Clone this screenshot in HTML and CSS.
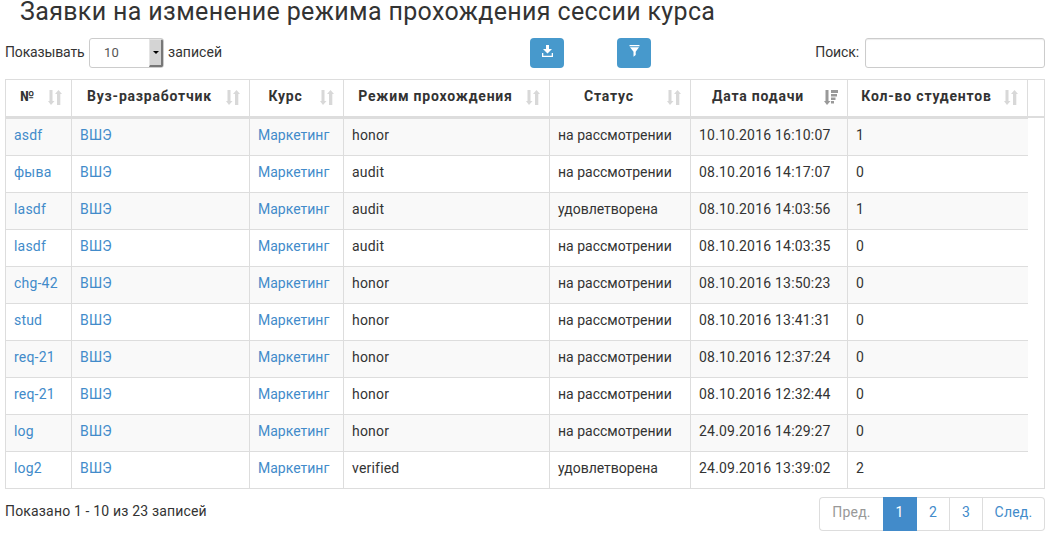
FILE: index.html
```html
<!DOCTYPE html>
<html lang="ru">
<head>
<meta charset="utf-8">
<title>Заявки</title>
<link rel="stylesheet" href="styles.css">
</head>
<body>
<svg class="defs" aria-hidden="true">
  <symbol id="sort" viewBox="0 0 14 15"><path d="M1.500 0h3v11h2L3 15 0 11h1.500zM9 15h3.300V4H14l-3.500-4L7 4h2z"/></symbol>
  <symbol id="sort-desc" viewBox="0 0 14 15"><path d="M1.500 0h3v11h2L3 15 0 11h1.500zM7 0h7v3H7zM7 4h6v2.500H7zM7 7.500h4.500V10H7zM7 11h3v2.500H7z"/></symbol>
</svg>
<h1 class="title">Заявки на изменение режима прохождения сессии курса</h1>
<div class="toolbar">
  <div class="length"><span class="length-label">Показывать</span>
    <span class="select"><span class="value">10</span><span class="arrow"></span></span><span class="records">записей</span></div>
  <div class="buttons">
    <button class="btn" aria-label="Скачать"><svg width="12" height="12" viewBox="0 0 12 12"><path d="M4 0h3v4h3L5.500 8.500 1 4h3zM0 8h1.300v2.700h8.400V8H11v4H0z"/></svg></button>
    <button class="btn" aria-label="Фильтр"><svg width="12" height="12" viewBox="0 0 12 12"><path d="M.5 0h10v1.300H.5zM1 2.200h9L6.700 6.700V10L4.500 11.700v-5z"/></svg></button>
  </div>
  <label class="search"><span>Поиск:</span><input type="text"></label>
</div>
<div class="table-wrap">
<table class="grid">
  <colgroup><col class="c1"><col class="c2"><col class="c3"><col class="c4"><col class="c5"><col class="c6"><col class="c7"><col class="c8"></colgroup>
  <thead><tr>
    <th><div><span>№</span><svg><use href="#sort"/></svg></div></th>
    <th><div><span>Вуз-разработчик</span><svg><use href="#sort"/></svg></div></th>
    <th><div><span>Курс</span><svg><use href="#sort"/></svg></div></th>
    <th><div><span>Режим прохождения</span><svg><use href="#sort"/></svg></div></th>
    <th><div><span>Статус</span><svg><use href="#sort"/></svg></div></th>
    <th><div><span>Дата подачи</span><svg class="active"><use href="#sort-desc"/></svg></div></th>
    <th><div><span>Кол-во студентов</span><svg><use href="#sort"/></svg></div></th>
    <th class="spare"></th>
  </tr></thead>
  <tbody>
    <tr><td><a>asdf</a></td><td><a>ВШЭ</a></td><td><a>Маркетинг</a></td><td>honor</td><td>на рассмотрении</td><td>10.10.2016 16:10:07</td><td>1</td></tr>
    <tr><td><a>фыва</a></td><td><a>ВШЭ</a></td><td><a>Маркетинг</a></td><td>audit</td><td>на рассмотрении</td><td>08.10.2016 14:17:07</td><td>0</td></tr>
    <tr><td><a>lasdf</a></td><td><a>ВШЭ</a></td><td><a>Маркетинг</a></td><td>audit</td><td>удовлетворена</td><td>08.10.2016 14:03:56</td><td>1</td></tr>
    <tr><td><a>lasdf</a></td><td><a>ВШЭ</a></td><td><a>Маркетинг</a></td><td>audit</td><td>на рассмотрении</td><td>08.10.2016 14:03:35</td><td>0</td></tr>
    <tr><td><a>chg-42</a></td><td><a>ВШЭ</a></td><td><a>Маркетинг</a></td><td>honor</td><td>на рассмотрении</td><td>08.10.2016 13:50:23</td><td>0</td></tr>
    <tr><td><a>stud</a></td><td><a>ВШЭ</a></td><td><a>Маркетинг</a></td><td>honor</td><td>на рассмотрении</td><td>08.10.2016 13:41:31</td><td>0</td></tr>
    <tr><td><a>req-21</a></td><td><a>ВШЭ</a></td><td><a>Маркетинг</a></td><td>honor</td><td>на рассмотрении</td><td>08.10.2016 12:37:24</td><td>0</td></tr>
    <tr><td><a>req-21</a></td><td><a>ВШЭ</a></td><td><a>Маркетинг</a></td><td>honor</td><td>на рассмотрении</td><td>08.10.2016 12:32:44</td><td>0</td></tr>
    <tr><td><a>log</a></td><td><a>ВШЭ</a></td><td><a>Маркетинг</a></td><td>honor</td><td>на рассмотрении</td><td>24.09.2016 14:29:27</td><td>0</td></tr>
    <tr><td><a>log2</a></td><td><a>ВШЭ</a></td><td><a>Маркетинг</a></td><td>verified</td><td>удовлетворена</td><td>24.09.2016 13:39:02</td><td>2</td></tr>
  </tbody>
</table>
</div>
<div class="footer">
  <div class="info">Показано 1 - 10 из 23 записей</div>
  <ul class="pages"><li class="prev">Пред.</li><li class="current">1</li><li class="p2">2</li><li class="p3">3</li><li class="next">След.</li></ul>
</div>
</body>
</html>
```
FILE: styles.css
```css
* { box-sizing: border-box; }
body {
  margin: 0;
  width: 1049px;
  background: #fff;
  color: #333;
  font: 14px/20px Roboto, "Noto Sans", sans-serif;
  letter-spacing: 0.2px;
}
.defs { display: none; }
.title {
  margin: 0;
  height: 38px;
  padding-left: 20px;
  font-size: 25px;
  font-weight: 400;
  line-height: 24px;
  letter-spacing: 0.35px;
  white-space: nowrap;
}
.toolbar { display: flex; height: 41px; padding: 0 4px 0 5px; }
.length { display: flex; width: 525px; line-height: 28px; }
.length-label { width: 84px; white-space: nowrap; letter-spacing: -0.15px; }
.select {
  display: flex;
  justify-content: space-between;
  width: 75px;
  height: 30px;
  border: 1px solid #ccc;
  border-radius: 3px;
  overflow: hidden;
}
.value { padding-left: 14px; font-size: 13px; line-height: 27px; color: #555; }
.arrow {
  display: flex;
  align-items: center;
  justify-content: center;
  width: 14px;
  background: #d4d4d4;
  border: 1px solid #e4e4e4;
  border-width: 1px 2px 2px 1px;
  border-right-color: #777;
  border-bottom-color: #777;
}
.arrow::after {
  content: "";
  border: 3px solid transparent;
  border-top-color: #000;
  border-bottom: 0;
}
.records { padding-left: 4px; letter-spacing: 0.05px; }
.buttons { display: flex; gap: 53px; }
.btn {
  display: flex;
  align-items: flex-start;
  width: 34px;
  height: 30px;
  padding: 7px 0 0 12px;
  border: 0;
  border-radius: 4px;
  background: #4799cc;
}
.btn svg { fill: #fff; display: block; }
.search {
  display: flex;
  flex: 1;
  justify-content: flex-end;
  gap: 6px;
  line-height: 28px;
  letter-spacing: -0.1px;
}
.search input {
  width: 180px;
  height: 30px;
  border: 1px solid #ccc;
  border-radius: 3px;
  box-shadow: inset 0 1px 1px rgba(0, 0, 0, .075);
}
.table-wrap { width: 1040px; height: 410px; margin-left: 5px; border: 1px solid #ddd; }
.grid { width: 1038px; table-layout: fixed; border-collapse: separate; border-spacing: 0; }
.c1 { width: 66px; }
.c2 { width: 178px; }
.c3 { width: 94px; }
.c4 { width: 206px; }
.c5 { width: 141px; }
.c6 { width: 157px; }
.c7 { width: 180px; }
.c8 { width: 16px; }
th {
  height: 39px;
  padding: 0 9px 4px 8px;
  border-right: 1px solid #ddd;
  border-bottom: 3px solid #ddd;
  vertical-align: middle;
  white-space: nowrap;
  font-weight: 700;
  letter-spacing: 0.8px;
}
th div { display: flex; align-items: center; }
th span { flex: 1; padding-right: 7px; text-align: center; }
th svg { flex: none; width: 14px; height: 15px; margin-top: 3px; fill: #d8d8d8; }
th svg.active { fill: #999; }
th.spare { padding: 0; border-right: 0; border-bottom: 0; background: linear-gradient(#ddd, #ddd) 0 36px / 100% 2px no-repeat; }
td {
  height: 37px;
  padding: 0 0 4px 8px;
  border-right: 1px solid #ddd;
  border-bottom: 1px solid #ddd;
  white-space: nowrap;
  line-height: 20px;
}
td:nth-child(3), td:nth-child(5) { letter-spacing: 0; }
td:nth-child(7) { border-right: 0; }
tbody tr:nth-child(odd) td { background: #f9f9f9; }
tbody tr:last-child td { height: 36px; border-bottom: 0; padding-bottom: 4px; }
a { color: #428bca; }
.footer { display: flex; justify-content: space-between; padding: 8px 4px 0 5px; }
.info { padding-top: 4px; letter-spacing: 0.17px; }
.pages {
  display: flex;
  width: 226px;
  height: 34px;
  margin: 0;
  padding: 0;
  list-style: none;
  color: #428bca;
  line-height: 28px;
  text-align: center;
}
.pages li { border: 1px solid #ddd; border-left: 0; }
.pages .prev { width: 64px; border-left: 1px solid #ddd; border-right: 0; border-radius: 4px 0 0 4px; color: #999; }
.pages .current { width: 34px; background: #428bca; border-color: #428bca; color: #fff; }
.pages .p2, .pages .p3 { width: 33px; }
.pages .next { width: 62px; border-radius: 0 4px 4px 0; }
```
